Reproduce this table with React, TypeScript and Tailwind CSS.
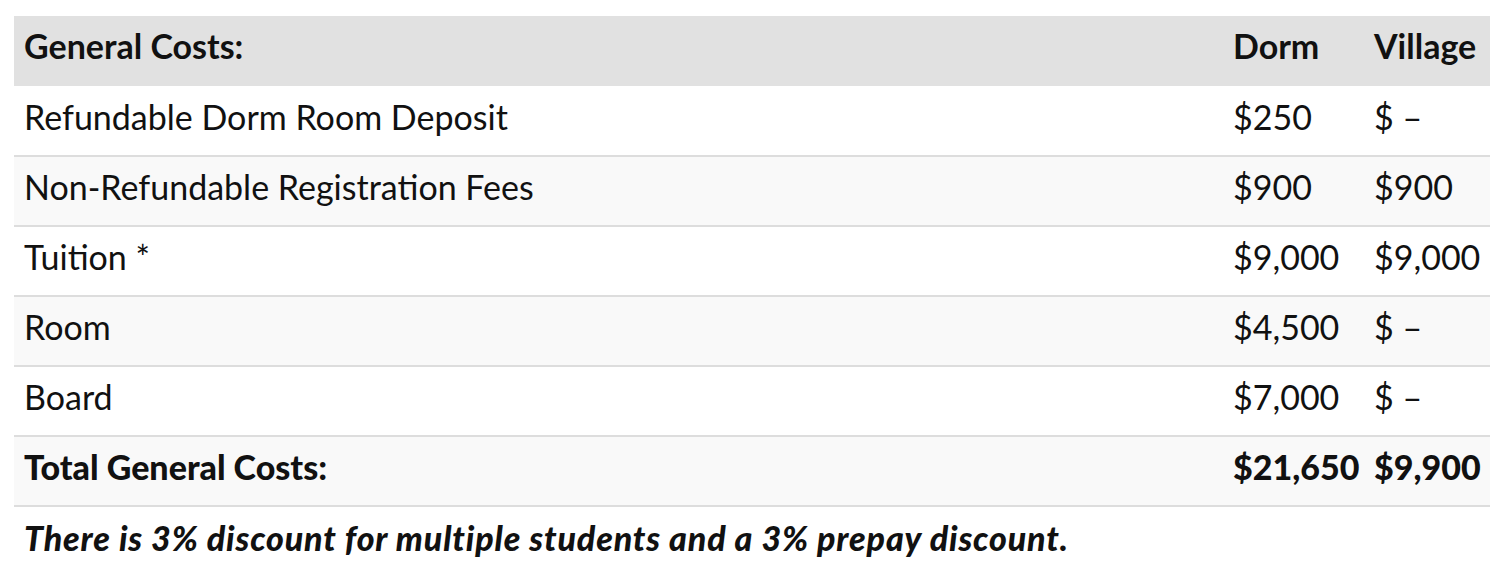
const rows = [
  { label: 'Refundable Dorm Room Deposit', dorm: '$250', village: '$ –' },
  { label: 'Non-Refundable Registration Fees', dorm: '$900', village: '$900' },
  { label: 'Tuition *', dorm: '$9,000', village: '$9,000' },
  { label: 'Room', dorm: '$4,500', village: '$ –' },
  { label: 'Board', dorm: '$7,000', village: '$ –' },
]

export default function App() {
  return (
    <div className="bg-white min-h-screen pt-[16px] px-[14px] text-[#111] font-['Lato',sans-serif]">
      <table className="w-[1476px] border-collapse text-[34px] leading-none">
        <colgroup>
          <col />
          <col className="w-[141px]" />
          <col className="w-[126px]" />
        </colgroup>
        <thead>
          <tr className="bg-[#e1e1e1] h-[70px] font-black">
            <th className="text-left pl-[10px] pb-[10px]">General Costs:</th>
            <th className="text-left pl-[10px] pb-[10px]">Dorm</th>
            <th className="text-left pl-[10px] pb-[10px]">Village</th>
          </tr>
        </thead>
        <tbody>
          {rows.map((r, i) => (
            <tr key={r.label} className={`h-[70px] border-b-2 border-[#dddddd] ${i % 2 === 1 ? 'bg-[#f9f9f9]' : 'bg-white'}`}>
              <td className="pl-[10px] pb-[8px]">{r.label}</td>
              <td className="pl-[10px] pb-[8px]">{r.dorm}</td>
              <td className="pl-[10px] pb-[8px]">{r.village}</td>
            </tr>
          ))}
          <tr className="h-[70px] border-b-2 border-[#dddddd] bg-[#f9f9f9] font-black">
            <td className="pl-[10px] pb-[8px]">Total General Costs:</td>
            <td className="pl-[10px] pb-[8px]">$21,650</td>
            <td className="pl-[10px] pb-[8px]">$9,900</td>
          </tr>
        </tbody>
      </table>
      <p className="pl-[10px] pt-[14px] text-[34px] leading-none font-black italic tracking-[0.85px]">
        There is 3% discount for multiple students and a 3% prepay discount.
      </p>
    </div>
  )
}
